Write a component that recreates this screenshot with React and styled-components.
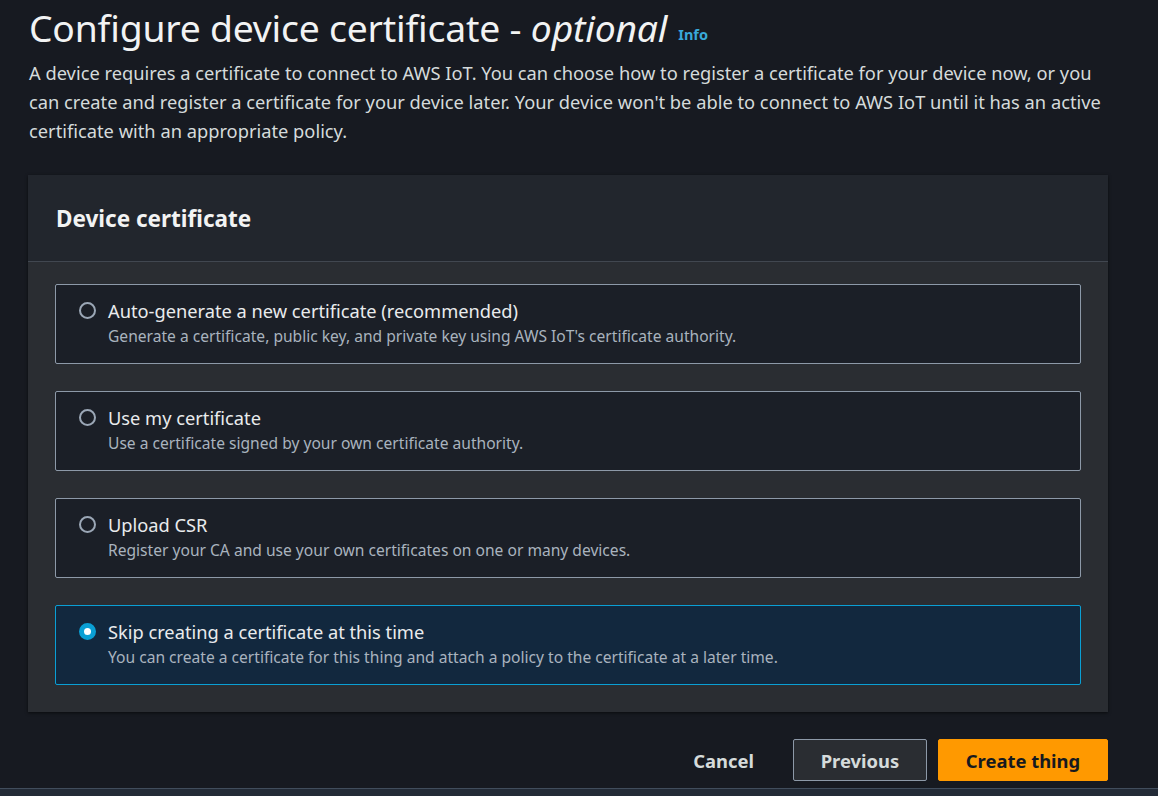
import React, { useState } from 'react';
import styled, { createGlobalStyle } from 'styled-components';

const GlobalStyle = createGlobalStyle`
  html, body {
    margin: 0;
    padding: 0;
    background: #171a21;
    font-family: "Noto Sans", "Open Sans", sans-serif;
    color: #e9ebed;
  }
  * { box-sizing: border-box; }
`;

const options = [
  {
    id: 'auto',
    label: 'Auto-generate a new certificate (recommended)',
    desc: "Generate a certificate, public key, and private key using AWS IoT's certificate authority.",
  },
  {
    id: 'own',
    label: 'Use my certificate',
    desc: 'Use a certificate signed by your own certificate authority.',
  },
  {
    id: 'csr',
    label: 'Upload CSR',
    desc: 'Register your CA and use your own certificates on one or many devices.',
  },
  {
    id: 'skip',
    label: 'Skip creating a certificate at this time',
    desc: 'You can create a certificate for this thing and attach a policy to the certificate at a later time.',
  },
];

function App() {
  const [selected, setSelected] = useState('skip');

  return (
    <>
      <GlobalStyle />
      <Page>
        <Title>
          Configure device certificate - <em>optional</em>
          <InfoLink>Info</InfoLink>
        </Title>
        <Intro>
          A device requires a certificate to connect to AWS IoT. You can choose how to register a certificate for your device now, or you
          can create and register a certificate for your device later. Your device won't be able to connect to AWS IoT until it has an active
          certificate with an appropriate policy.
        </Intro>

        <Panel>
          <PanelHeader>
            <PanelTitle>Device certificate</PanelTitle>
          </PanelHeader>
          <PanelBody>
            {options.map((o) => (
              <Tile key={o.id} $active={selected === o.id} onClick={() => setSelected(o.id)}>
                <Radio $active={selected === o.id} />
                <TileText>
                  <TileLabel>{o.label}</TileLabel>
                  <TileDesc>{o.desc}</TileDesc>
                </TileText>
              </Tile>
            ))}
          </PanelBody>
        </Panel>

        <Actions>
          <LinkButton>Cancel</LinkButton>
          <NormalButton>Previous</NormalButton>
          <PrimaryButton>Create thing</PrimaryButton>
        </Actions>
      </Page>
      <FooterBar />
    </>
  );
}

const Page = styled.div`
  width: 1108px;
  padding: 5px 0 0 28px;
  height: 788px;
`;

const Title = styled.h1`
  margin: 0 0 0 1px;
  font-size: 37.3px;
  font-weight: 400;
  line-height: 46px;
  color: #f2f3f3;
  letter-spacing: -0.2px;

  em {
    font-style: italic;
  }
`;

const InfoLink = styled.span`
  margin-left: 11px;
  font-size: 14.5px;
  font-weight: 700;
  color: #39a9d9;
  vertical-align: 2px;
  letter-spacing: 0;
`;

const Intro = styled.p`
  margin: 1px 0 0 1px;
  font-size: 18.3px;
  line-height: 29px;
  color: #d5dbdb;
`;

const Panel = styled.section`
  margin-top: 30px;
  width: 1080px;
  background: #2a2d32;
  box-shadow: 0 1px 3px rgba(0, 0, 0, 0.6);
`;

const PanelHeader = styled.div`
  height: 87px;
  display: flex;
  align-items: center;
  padding: 0 28px;
  background: #22262d;
  border-bottom: 1px solid #414750;
`;

const PanelTitle = styled.h2`
  margin: 0;
  font-size: 22.5px;
  font-weight: 700;
  color: #f2f3f3;
`;

const PanelBody = styled.div`
  display: flex;
  flex-direction: column;
  gap: 27px;
  padding: 22px 27px 27px;
`;

const Tile = styled.div`
  display: flex;
  align-items: flex-start;
  gap: 12px;
  padding: 13px 20px 15px 23px;
  background: ${(p) => (p.$active ? '#12283e' : '#1b1f27')};
  border: 1px solid ${(p) => (p.$active ? '#0a9fd4' : '#8d99a8')};
  border-radius: 2px;
  cursor: pointer;
`;

const Radio = styled.span`
  flex: none;
  width: 17px;
  height: 17px;
  margin-top: 4px;
  border-radius: 50%;
  border: ${(p) => (p.$active ? '5px solid #0a9fd4' : '2px solid #9ba7b6')};
  background: ${(p) => (p.$active ? '#ffffff' : 'transparent')};
`;

const TileText = styled.div`
  display: flex;
  flex-direction: column;
`;

const TileLabel = styled.div`
  font-size: 18.25px;
  line-height: 26px;
  color: #e9ebed;
`;

const TileDesc = styled.div`
  font-size: 15.6px;
  line-height: 24px;
  color: #a9b3be;
`;

const Actions = styled.div`
  display: flex;
  justify-content: flex-end;
  align-items: center;
  gap: 11px;
  margin-top: 27px;
  width: 1080px;
`;

const ButtonBase = styled.button`
  font-family: "Noto Sans", "Open Sans", sans-serif;
  font-size: 18.4px;
  font-weight: 700;
  height: 42px;
  padding: 0;
  border-radius: 2px;
  cursor: pointer;
`;

const LinkButton = styled(ButtonBase)`
  background: transparent;
  border: none;
  color: #d5dbdb;
  padding: 0 28px 0 0;
`;

const NormalButton = styled(ButtonBase)`
  width: 134px;
  background: #2a2d32;
  border: 1px solid #8d99a8;
  color: #d5dbdb;
`;

const PrimaryButton = styled(ButtonBase)`
  width: 170px;
  background: #ff9900;
  border: 1px solid #ff9900;
  color: #16191f;
`;

const FooterBar = styled.div`
  height: 8px;
  background: #232b37;
  border-top: 1px solid #414d5c;
`;

export default App;
